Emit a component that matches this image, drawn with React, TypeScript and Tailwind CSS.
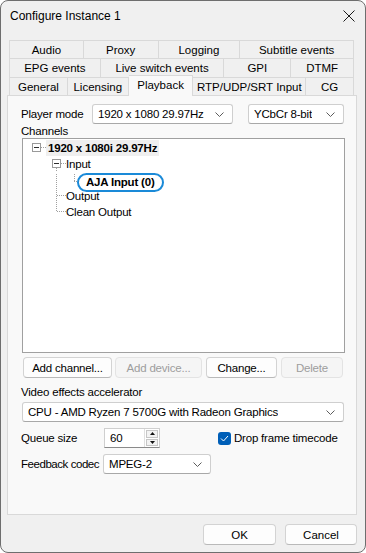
import React from "react";

const ROW1 = [
  { label: "Audio", w: "w-[74px]" },
  { label: "Proxy", w: "w-[75px]" },
  { label: "Logging", w: "w-[82px]" },
  { label: "Subtitle events", w: "w-[114px]" },
];
const ROW2 = [
  { label: "EPG events", w: "w-[91px]" },
  { label: "Live switch events", w: "w-[124px]" },
  { label: "GPI", w: "w-[67px]" },
  { label: "DTMF", w: "w-[63px]" },
];
const ROW3 = [
  { label: "General", w: "w-[58px]" },
  { label: "Licensing", w: "w-[61px]" },
  { label: "Playback", w: "w-[65px]", active: true },
  { label: "RTP/UDP/SRT Input", w: "w-[113px]" },
  { label: "CG", w: "w-[48px]" },
];

function Chevron() {
  return (
    <svg width="9" height="5" viewBox="0 0 9 5" className="shrink-0">
      <path d="M0.5 0.5 L4.5 4.5 L8.5 0.5" fill="none" stroke="#5c5c5c" strokeWidth="1" />
    </svg>
  );
}

function Select({ value, w }: { value: string; w: string }) {
  return (
    <div
      className={`${w} h-[20px] shrink-0 flex items-center justify-between pl-[5px] pr-[8px] bg-white border border-[#cfcfcf] border-b-[#a8a8a8] rounded-[3px]`}
    >
      <span className="truncate whitespace-nowrap">{value}</span>
      <Chevron />
    </div>
  );
}

function Btn({ label, w, disabled }: { label: string; w: string; disabled?: boolean }) {
  return (
    <div
      className={`${w} h-[21px] flex items-center justify-center whitespace-nowrap rounded-[4px] border ${
        disabled
          ? "bg-[#f5f5f5] border-[#e3e3e3] text-[#9d9d9d]"
          : "bg-[#fdfdfd] border-[#d3d3d3] border-b-[#b9b9b9] text-black"
      }`}
    >
      {label}
    </div>
  );
}

function MinusBox({ x }: { x: number }) {
  return (
    <>
      <rect x={x + 0.5} y={3.5} width={8} height={8} fill="#fff" stroke="#9a9a9a" />
      <line x1={x + 2} y1={7.5} x2={x + 7} y2={7.5} stroke="#2e2e2e" />
    </>
  );
}

const dot = { stroke: "#a0a0a0", strokeDasharray: "1 1", strokeWidth: 1 };

export default function App() {
  return (
    <div className="w-[366px] h-[553px] flex flex-col bg-[#f0f0f0] border border-[#6e6e6e] rounded-[8px] overflow-hidden text-[11.5px] leading-[16px] text-black font-['Liberation_Sans',Arial,sans-serif]">
      {/* title bar */}
      <div className="h-[29px] flex items-center justify-between pl-[9px] pr-[10px] text-[12px]">
        <span>Configure Instance 1</span>
        <svg width="12" height="12" viewBox="0 0 12 12">
          <path d="M0.5 0.5 L11.5 11.5 M11.5 0.5 L0.5 11.5" stroke="#1a1a1a" strokeWidth="1" />
        </svg>
      </div>

      {/* tabs */}
      <div className="mt-[10px] ml-[8px] w-[345px] flex flex-col">
        <div className="flex h-[18px] border-l border-[#d9d9d9]">
          {ROW1.map((t) => (
            <div key={t.label} className={`${t.w} flex items-center justify-center whitespace-nowrap border-t border-r border-[#d9d9d9]`}>
              {t.label}
            </div>
          ))}
        </div>
        <div className="flex h-[19px] border-l border-[#d9d9d9]">
          {ROW2.map((t) => (
            <div key={t.label} className={`${t.w} flex items-center justify-center whitespace-nowrap border-t border-r border-[#d9d9d9]`}>
              {t.label}
            </div>
          ))}
        </div>
        <div className="flex h-[18px] border-l border-[#d9d9d9]">
          {ROW3.map((t) =>
            t.active ? (
              <div
                key={t.label}
                className={`${t.w} relative z-10 -mt-[2px] h-[21px] flex items-start pt-[1px] justify-center whitespace-nowrap bg-[#f9f9f9] border-t border-r border-[#d9d9d9]`}
              >
                {t.label}
              </div>
            ) : (
              <div key={t.label} className={`${t.w} flex items-center justify-center whitespace-nowrap border-t border-r border-[#d9d9d9]`}>
                {t.label}
              </div>
            )
          )}
        </div>
      </div>

      {/* panel */}
      <div className="ml-[6px] w-[350px] h-[420px] bg-[#f9f9f9] border border-[#d9d9d9] flex flex-col px-[13px] pt-[8px] tracking-[-0.2px]">
        <div className="flex items-center h-[20px]">
          <span className="w-[71px] shrink-0 whitespace-nowrap">Player mode</span>
          <Select value="1920 x 1080 29.97Hz" w="w-[141px]" />
          <div className="ml-[15px]">
            <Select value="YCbCr 8-bit" w="w-[96px]" />
          </div>
        </div>
        <div className="h-[14px] leading-[14px]">Channels</div>
        <div className="ml-px w-[323px] h-[215px] bg-white border border-[#a0a0a0] pt-[1px] flex flex-col">
          <div className="flex items-center h-[16px]">
            <svg width="23" height="16" className="shrink-0">
              <MinusBox x={9} />
              <line x1={18} y1={7.5} x2={23} y2={7.5} {...dot} />
            </svg>
            <span className="px-[2px] bg-[#efefef] font-bold whitespace-nowrap">1920 x 1080i 29.97Hz</span>
          </div>
          <div className="flex items-center h-[16px]">
            <svg width="43" height="16" className="shrink-0">
              <MinusBox x={29} />
              <line x1={38} y1={7.5} x2={43} y2={7.5} {...dot} />
              <line x1={33.5} y1={12} x2={33.5} y2={16} {...dot} />
            </svg>
            <span>Input</span>
          </div>
          <div className="flex items-center h-[16px] mt-[2px]">
            <svg width="54" height="16" className="shrink-0">
              <line x1={33.5} y1={0} x2={33.5} y2={16} {...dot} />
              <line x1={51.5} y1={-2} x2={51.5} y2={8} {...dot} />
              <line x1={51} y1={7.5} x2={54} y2={7.5} {...dot} />
            </svg>
            <span className="-my-[1px] h-[19px] flex items-center pl-[7px] pr-[7px] border-2 border-[#1a8ad8] rounded-full font-bold whitespace-nowrap">
              AJA Input (0)
            </span>
          </div>
          <div className="flex items-center h-[16px] -mt-[2px]">
            <svg width="43" height="16" className="shrink-0">
              <line x1={33.5} y1={-2} x2={33.5} y2={16} {...dot} />
              <line x1={34} y1={7.5} x2={43} y2={7.5} {...dot} />
            </svg>
            <span>Output</span>
          </div>
          <div className="flex items-center h-[16px]">
            <svg width="43" height="16" className="shrink-0">
              <line x1={33.5} y1={0} x2={33.5} y2={8} {...dot} />
              <line x1={34} y1={7.5} x2={43} y2={7.5} {...dot} />
            </svg>
            <span>Clean Output</span>
          </div>
        </div>

        <div className="flex mt-[4px] ml-[2px]">
          <Btn label="Add channel..." w="w-[90px]" />
          <div className="ml-[3px]">
            <Btn label="Add device..." w="w-[87px]" disabled />
          </div>
          <div className="ml-[4px]">
            <Btn label="Change..." w="w-[71px]" />
          </div>
          <div className="ml-[4px]">
            <Btn label="Delete" w="w-[62px]" disabled />
          </div>
        </div>

        <div className="mt-[7px] h-[14px] leading-[14px]">Video effects accelerator</div>
        <div className="mt-[3px] ml-px">
          <Select value="CPU - AMD Ryzen 7 5700G with Radeon Graphics" w="w-[322px]" />
        </div>

        <div className="mt-[6px] h-[20px] flex items-center">
          <span className="w-[83px] shrink-0 whitespace-nowrap">Queue size</span>
          <div className="w-[56px] h-[20px] shrink-0 flex bg-white border border-[#cfcfcf] border-b-[#8a8a8a]">
            <span className="flex-1 pl-[5px] flex items-center">60</span>
            <div className="w-[15px] flex flex-col border-l border-[#e0e0e0] p-px gap-px">
              <div className="flex-1 flex items-center justify-center bg-[#f3f3f3] border border-[#c6c6c6]">
                <svg width="5" height="3" viewBox="0 0 5 3">
                  <path d="M0 3 L2.5 0 L5 3 Z" fill="#111" />
                </svg>
              </div>
              <div className="flex-1 flex items-center justify-center bg-[#f3f3f3] border border-[#c6c6c6]">
                <svg width="5" height="3" viewBox="0 0 5 3">
                  <path d="M0 0 L2.5 3 L5 0 Z" fill="#111" />
                </svg>
              </div>
            </div>
          </div>
          <div className="ml-[58px] w-[13px] h-[13px] shrink-0 rounded-[3px] bg-[#005fb8] flex items-center justify-center">
            <svg width="9" height="7" viewBox="0 0 9 7">
              <path d="M1 3.5 L3.5 6 L8 1" fill="none" stroke="#fff" strokeWidth="1" />
            </svg>
          </div>
          <span className="ml-[3px] whitespace-nowrap">Drop frame timecode</span>
        </div>

        <div className="mt-[6px] h-[20px] flex items-center">
          <span className="w-[82px] shrink-0 whitespace-nowrap tracking-[-0.45px]">Feedback codec</span>
          <Select value="MPEG-2" w="w-[108px]" />
        </div>
      </div>

      {/* footer */}
      <div className="mt-[9px] flex justify-end gap-[9px] pr-[8px]">
        <Btn label="OK" w="w-[73px]" />
        <Btn label="Cancel" w="w-[72px]" />
      </div>
    </div>
  );
}
